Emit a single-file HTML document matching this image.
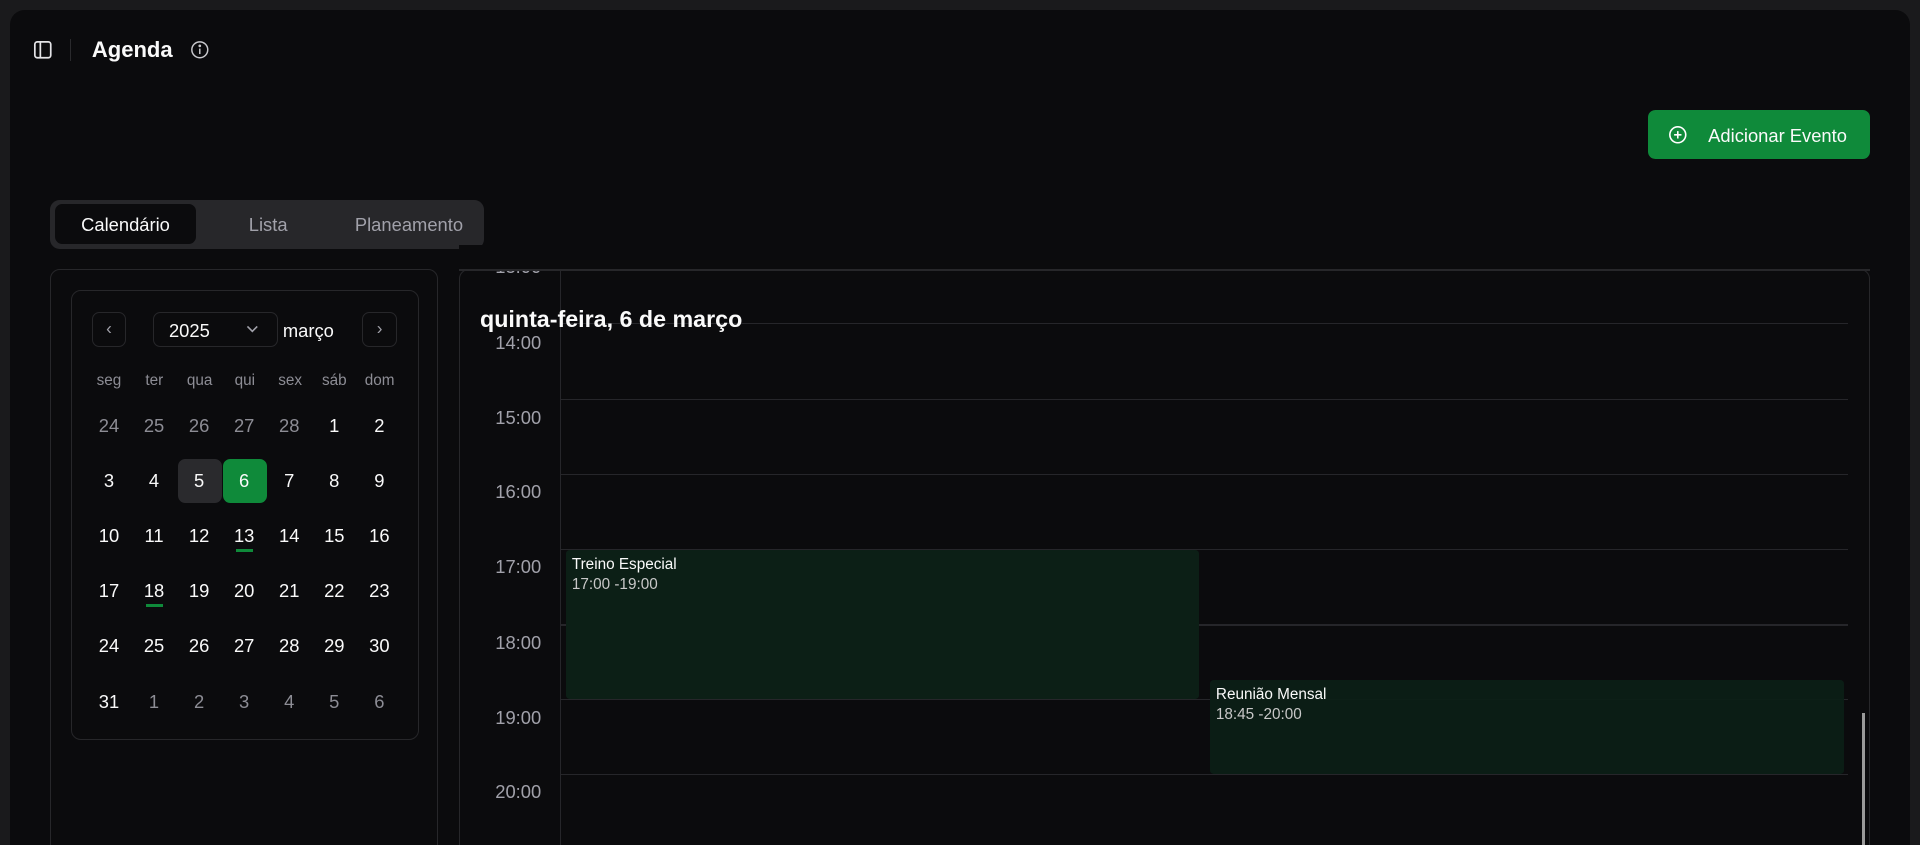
<!DOCTYPE html>
<html><head><meta charset="utf-8"><style>
*{margin:0;padding:0;box-sizing:border-box}
html,body{width:1920px;height:845px;overflow:hidden;background:#1a1a1c}
#r{zoom:1.2244898;width:1568px;height:690px;position:relative;font-family:"Liberation Sans",sans-serif;color:#fafafa;overflow:hidden}
.a{position:absolute}
.panel{left:8px;top:8px;width:1552px;height:700px;background:#0b0b0d;border-radius:12px}
.card{border:1px solid #27272a;border-radius:8px}
.day{position:absolute;width:36px;height:36px;line-height:36px;text-align:center;font-size:15px;border-radius:6px}
.m{color:#8d8d95}
.wd{position:absolute;width:36px;text-align:center;font-size:12.5px;color:#8d8d95;top:304px}
.hl{position:absolute;left:457px;width:1052px;height:1px;background:#26262a}
.tl{position:absolute;left:380px;width:62px;text-align:right;font-size:15px;color:#a1a1aa}
.ev{position:absolute;background:#0c1f16;border-radius:3px;padding:5px 5px;font-size:12.5px}
.ev div+div{color:#c8c8c8;margin-top:2px}
</style></head><body><div id="r">
<div class="a panel"></div>
<svg class="a" style="left:27px;top:33px" width="16" height="16" viewBox="0 0 16 16" fill="none" stroke="#e4e4e7" stroke-width="1.4"><rect x="1.5" y="1.5" width="13" height="13" rx="2"/><line x1="6" y1="1.5" x2="6" y2="14.5"/></svg>
<div class="a" style="left:57px;top:32px;width:1px;height:18px;background:#2a2a2d"></div>
<div class="a" style="left:75px;top:30px;font-size:18px;font-weight:bold">Agenda</div>
<svg class="a" style="left:155px;top:33px" width="16" height="16" viewBox="0 0 16 16" fill="none" stroke="#c8c8cc" stroke-width="1.2"><circle cx="8" cy="8" r="6.5"/><line x1="8" y1="7" x2="8" y2="11.5"/><circle cx="8" cy="4.8" r=".5" fill="#c8c8cc"/></svg>
<div class="a" style="left:1346px;top:90px;width:181px;height:40px;background:#0f8a3a;border-radius:6px"></div>
<svg class="a" style="left:1362px;top:102px" width="16" height="16" viewBox="0 0 16 16" fill="none" stroke="#fff" stroke-width="1.3"><circle cx="8" cy="8" r="6.5"/><path d="M8 5v6M5 8h6"/></svg>
<div class="a" style="left:1395px;top:102px;font-size:15px">Adicionar Evento</div>
<div class="a" style="left:41px;top:163px;width:354px;height:40px;background:#27272a;border-radius:8px"></div>
<div class="a" style="left:45px;top:167px;width:115px;height:32px;background:#0b0b0d;border-radius:6px"></div>
<div class="a" style="left:45px;top:175px;width:115px;text-align:center;font-size:15px">Calendário</div>
<div class="a" style="left:170px;top:175px;width:98px;text-align:center;font-size:15px;color:#a1a1aa">Lista</div>
<div class="a" style="left:280px;top:175px;width:108px;text-align:center;font-size:15px;color:#a1a1aa">Planeamento</div>
<div class="a card" style="left:41px;top:220px;width:317px;height:500px"></div>
<div class="a card" style="left:58px;top:237px;width:284px;height:367px"></div>
<div class="a card" style="left:75px;top:255px;width:28px;height:28px;border-radius:6px"></div>
<div class="a" style="left:75px;top:260px;width:28px;text-align:center;color:#a1a1aa;font-size:14px">‹</div>
<div class="a card" style="left:125px;top:255px;width:102px;height:28px;border-radius:6px"></div>
<div class="a" style="left:138px;top:261px;font-size:15px">2025</div>
<svg class="a" style="left:200px;top:265px" width="12" height="8" viewBox="0 0 12 8" fill="none" stroke="#a1a1aa" stroke-width="1.3"><path d="M2 2l4 4 4-4"/></svg>
<div class="a" style="left:231px;top:261px;font-size:15px">março</div>
<div class="a card" style="left:296px;top:255px;width:28px;height:28px;border-radius:6px"></div>
<div class="a" style="left:296px;top:260px;width:28px;text-align:center;color:#a1a1aa;font-size:14px">›</div>
<div class="wd" style="left:71px">seg</div><div class="wd" style="left:108px">ter</div><div class="wd" style="left:145px">qua</div><div class="wd" style="left:182px">qui</div><div class="wd" style="left:219px">sex</div><div class="wd" style="left:255px">sáb</div><div class="wd" style="left:292px">dom</div>
<div class="a" style="left:145px;top:375px;width:36px;height:36px;background:#2a2a2d;border-radius:6px"></div>
<div class="a" style="left:182px;top:375px;width:36px;height:36px;background:#0f8a3a;border-radius:6px"></div>
<div class="a" style="left:193px;top:448px;width:14px;height:3px;background:#0f8a3a"></div>
<div class="a" style="left:119px;top:493px;width:14px;height:3px;background:#0f8a3a"></div>
<div id="days"></div>
<div class="a card" style="left:375px;top:220px;width:1152px;height:500px;overflow:hidden">
</div>
<div class="tl" style="top:209px;clip-path:inset(0 0 0 0)">13:00</div>
<div class="a" style="left:375px;top:200px;width:1152px;height:21px;background:#0b0b0d"></div>
<div class="a" style="left:375px;top:220px;width:1152px;height:1px;background:#27272a"></div>
<div class="a" style="left:457px;top:221px;width:1px;height:470px;background:#26262a"></div>
<div class="hl" style="top:264px"></div><div class="hl" style="top:326px"></div><div class="hl" style="top:387px"></div><div class="hl" style="top:448px"></div><div class="hl" style="top:510px"></div><div class="hl" style="top:571px"></div><div class="hl" style="top:632px"></div>
<div class="tl" style="top:271px">14:00</div><div class="tl" style="top:332px">15:00</div><div class="tl" style="top:393px">16:00</div><div class="tl" style="top:454px">17:00</div><div class="tl" style="top:516px">18:00</div><div class="tl" style="top:577px">19:00</div><div class="tl" style="top:638px">20:00</div>
<div class="ev" style="left:462px;top:449px;width:517px;height:122px"><div>Treino Especial</div><div>17:00 -19:00</div></div>
<div class="ev" style="left:988px;top:555px;width:518px;height:77px;background:rgba(12,31,22,.95)"><div>Reunião Mensal</div><div>18:45 -20:00</div></div>
<div class="a" style="left:392px;top:250px;font-size:19px;font-weight:bold">quinta-feira, 6 de março</div>
<div class="a" style="left:1521px;top:582px;width:2px;height:110px;background:#9a9a9a"></div>
<script>
var rows=[[24,25,26,27,28,1,2],[3,4,5,6,7,8,9],[10,11,12,13,14,15,16],[17,18,19,20,21,22,23],[24,25,26,27,28,29,30],[31,1,2,3,4,5,6]];
var h='';rows.forEach(function(r,i){r.forEach(function(d,j){var m=(i==0&&j<5)||(i==5&&j>0);h+='<div class="day'+(m?' m':'')+'" style="left:'+(71+j*36.8)+'px;top:'+(330+i*45)+'px">'+d+'</div>';});});
document.getElementById('days').innerHTML=h;
</script>
</div></body></html>
